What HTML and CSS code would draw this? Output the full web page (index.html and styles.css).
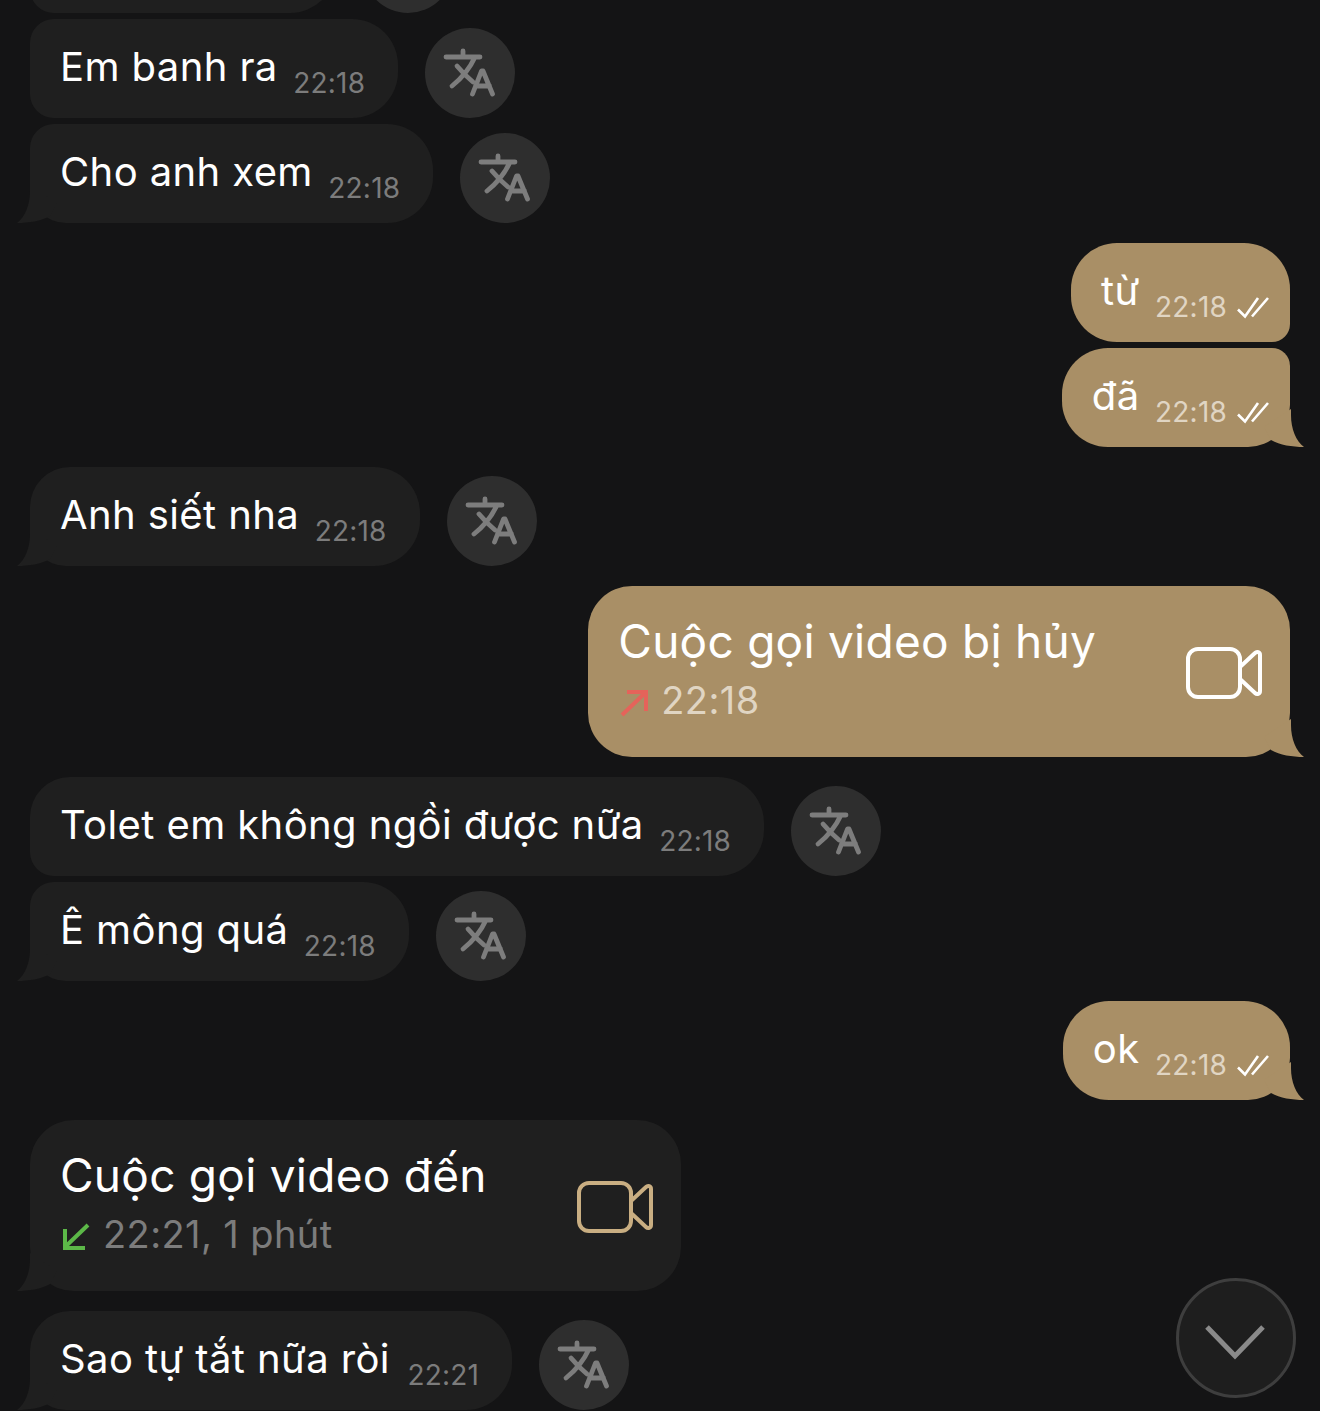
FILE: index.html
```html
<!doctype html>
<html lang="vi">
<head>
  <meta charset="UTF-8">
  <title>Tin nhắn</title>
  <link rel="stylesheet" href="styles.css">
</head>
<body>
  <svg class="defs" width="0" height="0">
    <symbol id="translate" viewBox="0 0 90 90">
      <path d="M21 29H55M38 23V29M50 29C45 40 37 50 27 58M32 38C37 44 42 49 48 54" fill="none" stroke="currentColor" stroke-width="4.800" stroke-linecap="round"/>
      <path d="M47.500 66L56.500 43H58L67.500 66M50.500 58H64.500" fill="none" stroke="currentColor" stroke-width="4.800" stroke-linecap="round" stroke-linejoin="round"/>
    </symbol>
    <symbol id="checks" viewBox="0 0 32 22">
      <path d="M1 12.500L8 19.500L21 1M15 19.500L31 1" fill="none" stroke="currentColor" stroke-width="2.600"/>
    </symbol>
    <symbol id="video" viewBox="0 0 76 52">
      <rect x="2" y="2" width="52" height="48" rx="10" fill="none" stroke="currentColor" stroke-width="4"/>
      <path d="M54 20L69 6C71 4 74 5 74 8V44C74 47 71 48 69 46L54 32" fill="none" stroke="currentColor" stroke-width="4" stroke-linejoin="round"/>
    </symbol>
    <symbol id="tail" viewBox="0 0 40 40">
      <path d="M13 2V8C13 22 8 34 0 40C12 40 24 38 33 33L40 20L13 2Z" fill="currentColor"/>
    </symbol>
  </svg>

  <div class="chat">
    <div class="row in">
      <div class="bubble cut"></div>
      <button class="tr"><svg><use href="#translate"/></svg></button>
    </div>
    <div class="row in tight">
      <div class="bubble"><span class="text">Em banh ra</span><span class="time">22:18</span></div>
      <button class="tr"><svg><use href="#translate"/></svg></button>
    </div>
    <div class="row in tight">
      <div class="bubble last"><span class="text">Cho anh xem</span><span class="time">22:18</span><svg class="tail"><use href="#tail"/></svg></div>
      <button class="tr"><svg><use href="#translate"/></svg></button>
    </div>

    <div class="row out">
      <div class="bubble first"><span class="text">từ</span><span class="time">22:18</span><svg class="checks"><use href="#checks"/></svg></div>
    </div>
    <div class="row out tight">
      <div class="bubble last"><span class="text">đã</span><span class="time">22:18</span><svg class="checks"><use href="#checks"/></svg><svg class="tail"><use href="#tail"/></svg></div>
    </div>

    <div class="row in">
      <div class="bubble last solo"><span class="text">Anh siết nha</span><span class="time">22:18</span><svg class="tail"><use href="#tail"/></svg></div>
      <button class="tr"><svg><use href="#translate"/></svg></button>
    </div>

    <div class="row out">
      <div class="bubble call last">
        <div class="call-info">
          <div class="call-title">Cuộc gọi video bị hủy</div>
          <div class="call-sub">
            <svg class="arrow missed" viewBox="0 0 28 28"><path d="M2 26L25 4M7 3H26V22" fill="none" stroke="currentColor" stroke-width="4"/></svg>
            <span>22:18</span>
          </div>
        </div>
        <svg class="video"><use href="#video"/></svg>
        <svg class="tail"><use href="#tail"/></svg>
      </div>
    </div>

    <div class="row in">
      <div class="bubble first"><span class="text">Tolet em không ngồi được nữa</span><span class="time">22:18</span></div>
      <button class="tr"><svg><use href="#translate"/></svg></button>
    </div>
    <div class="row in tight">
      <div class="bubble last"><span class="text">Ê mông quá</span><span class="time">22:18</span><svg class="tail"><use href="#tail"/></svg></div>
      <button class="tr"><svg><use href="#translate"/></svg></button>
    </div>

    <div class="row out">
      <div class="bubble solo"><span class="text">ok</span><span class="time">22:18</span><svg class="checks"><use href="#checks"/></svg><svg class="tail"><use href="#tail"/></svg></div>
    </div>

    <div class="row in">
      <div class="bubble call last">
        <div class="call-info">
          <div class="call-title">Cuộc gọi video đến</div>
          <div class="call-sub">
            <svg class="arrow answered" viewBox="0 0 28 28"><path d="M26 2L3 24M3 6V25H23" fill="none" stroke="currentColor" stroke-width="4"/></svg>
            <span>22:21, 1 phút</span>
          </div>
        </div>
        <svg class="video"><use href="#video"/></svg>
        <svg class="tail"><use href="#tail"/></svg>
      </div>
    </div>

    <div class="row in">
      <div class="bubble last solo sao"><span class="text">Sao tự tắt nữa ròi</span><span class="time">22:21</span><svg class="tail"><use href="#tail"/></svg></div>
      <button class="tr"><svg><use href="#translate"/></svg></button>
    </div>
  </div>

  <button class="scroll-down">
    <svg viewBox="0 0 60 36"><path d="M2 3L30 32L58 3" fill="none" stroke="currentColor" stroke-width="5"/></svg>
  </button>
</body>
</html>
```

FILE: styles.css
```css
*{margin:0;
  padding:0;
  box-sizing:border-box;}
html,body{height:1411px;
          overflow:hidden;}
body{background:#141415;
     color:#fff;
     font-family:"Inter","Noto Sans",sans-serif;
     position:relative;}
.defs{display:block;}

.chat{display:flex;
      flex-direction:column;
      gap:20px;
      margin-top:-86px;
      padding:0 30px;}
.row{display:flex;
     align-items:flex-end;
     gap:27px;}
.row.tight{margin-top:-14px;}
.row.out{justify-content:flex-end;}

.bubble{display:flex;
        align-items:center;
        height:99px;
        padding:0 33px 0 30px;
        background:#1f1f1f;
        position:relative;}
.bubble.cut{width:306px;}
.row.in .bubble{border-radius:24px 46px 46px 24px;}
.row.in .bubble.first{border-radius:40px 46px 46px 24px;}
.row.in .bubble.last{border-radius:24px 46px 46px 36px;}
.row.in .bubble.solo{border-radius:40px 46px 46px 36px;}
.row.out .bubble{background:#a98f66;
                 padding-right:21px;}
.row.out .bubble.first{border-radius:46px 46px 18px 46px;}
.row.out .bubble.solo{border-radius:46px 46px 42px 46px;}
.row.out .bubble.last{border-radius:46px 18px 42px 46px;}
.row.out .bubble.last.call,
.row.in .bubble.last.call{border-radius:44px;}

.text{font-size:40px;
      letter-spacing:.4px;
      margin-right:15.500px;
      margin-top:-5px;}
.sao .text{margin-right:17.500px;}
.time{font-size:28px;
      letter-spacing:.2px;
      color:#7c7c7c;
      margin-top:28px;}
.row.out .time{color:#e0d5c3;}
.checks{width:32px;
        height:22px;
        margin:30px 0 0 10px;
        color:#fff;}

.tail{position:absolute;
      left:-13px;
      bottom:0;
      width:40px;
      height:40px;
      color:#1f1f1f;}
.row.out .tail{left:auto;
               right:-14px;
               transform:scaleX(-1);
               color:#a98f66;}

.tr{flex:none;
    width:90px;
    height:90px;
    border:0;
    border-radius:50%;
    background:#2e2e2e;
    color:#7d7d7d;}
.tr svg{display:block;
        width:90px;
        height:90px;}

.bubble.call{height:171px;
             padding:0 28px 0 30px;
             gap:90px;}
.row.out .bubble.call{padding-right:28px;}
.call-info{display:flex;
           flex-direction:column;
           gap:9px;
           margin-top:-6px;}
.call-title{font-size:46px;
            letter-spacing:.25px;
            line-height:54px;}
.call-sub{display:flex;
          align-items:center;
          gap:13px;
          font-size:38px;
          line-height:46px;
          letter-spacing:.4px;
          color:#7c7c7c;}
.row.out .call-sub{color:#e0d5c3;}
.arrow{width:28px;
       height:28px;
       margin:6px 0 0 2px;}
.arrow.missed{color:#e5635a;}
.arrow.answered{color:#5cb848;}
.video{width:76px;
       height:52px;
       margin-top:3px;
       color:#c9ae82;}
.row.out .video{color:#fff;}

.scroll-down{position:absolute;
             left:1176px;
             top:1278px;
             width:120px;
             height:120px;
             border:3px solid #3e3e3e;
             border-radius:50%;
             background:#1e1e1e;
             color:#8a8a8a;
             display:flex;
             align-items:center;
             justify-content:center;}
.scroll-down svg{width:60px;
                 height:36px;
                 margin:8px 3px 0 0;}
```
